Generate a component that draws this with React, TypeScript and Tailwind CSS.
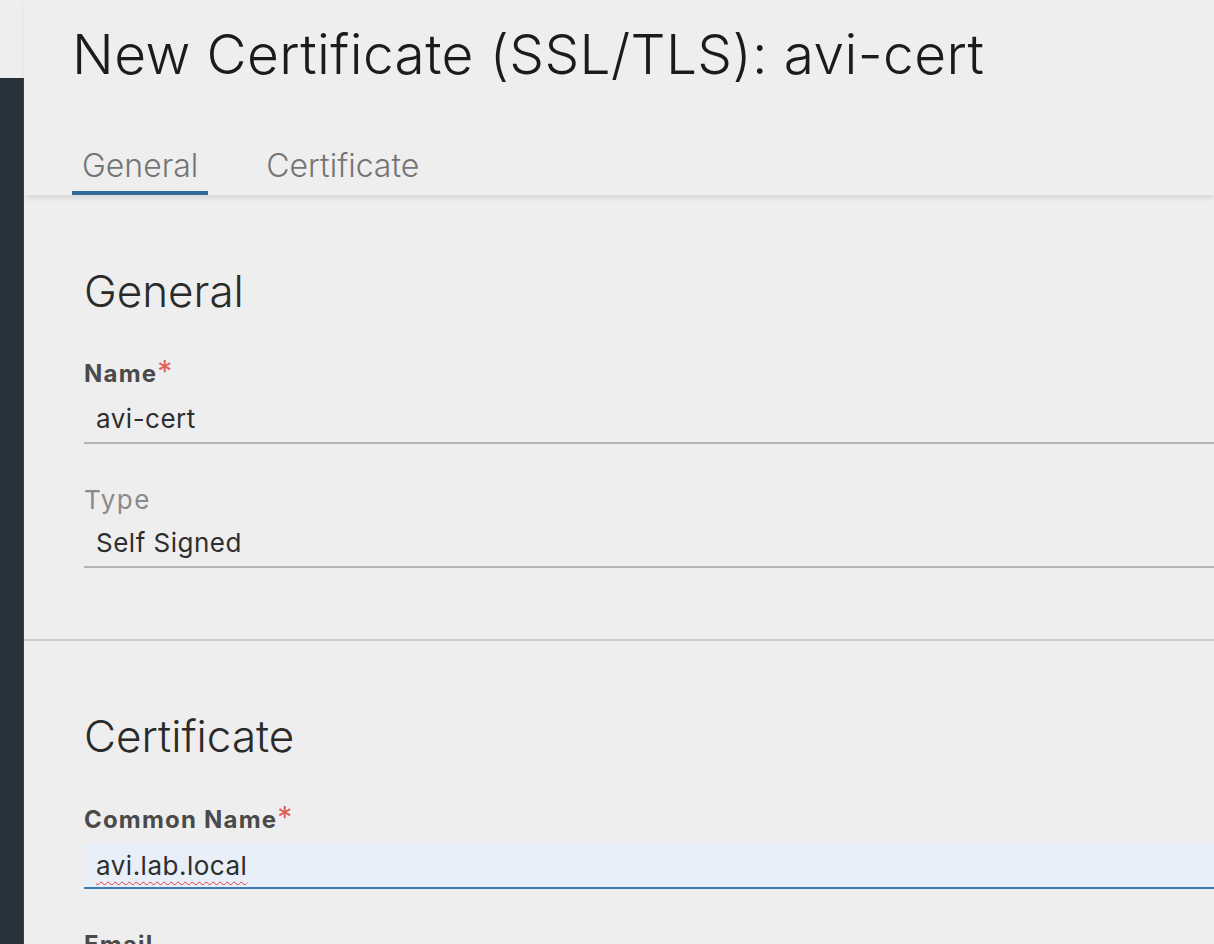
export default function App() {
  const font = { fontFamily: 'Inter, "Noto Sans", sans-serif' };
  return (
    <div className="w-[1214px] h-[944px] overflow-hidden bg-[#eeeeee] flex" style={font}>
      <div className="w-[24px] flex flex-col shrink-0">
        <div className="h-[78px]" />
        <div className="flex-1 bg-[#28323b] border-r border-[#3a434b]" />
      </div>
      <div className="flex-1 flex flex-col min-w-0">
        <div className="relative shadow-[0_4px_5px_-1px_rgba(0,0,0,0.10)]">
          <h1 className="pl-[48px] pt-[22px] text-[55px] leading-[64px] font-light tracking-[0.4px] text-[#1b1b1b] whitespace-nowrap">
            New Certificate (SSL/TLS): avi-cert
          </h1>
          <div className="flex pl-[48px] mt-[60px]">
            <div className="px-[10px] pb-[5px] border-b-[4px] border-[#2f6b9a] text-[32px] leading-[40px] text-[#757575] font-light">
              General
            </div>
            <div className="ml-[48px] px-[10px] pb-[5px] border-b-[4px] border-transparent text-[32px] leading-[40px] text-[#757575] font-light">
              Certificate
            </div>
          </div>
        </div>
        <div className="pl-[60px] pt-[70px]">
          <h2 className="text-[44px] leading-[52px] font-light text-[#2a2a2a]">General</h2>
          <div className="mt-[44px] h-[33px] text-[24px] leading-[26px] font-bold tracking-[1.2px] text-[#4a4a4a]">
            Name<span className="text-[#e0605a] font-normal text-[30px] leading-[20px] align-top tracking-normal">*</span>
          </div>
          <div className="border-b-2 border-[#b5b5b5] pl-[12px] h-[50px] flex items-center text-[26px] tracking-[0.5px] text-[#2e2e2e]">
            avi-cert
          </div>
          <div className="mt-[41px] h-[33px] text-[26px] leading-[30px] tracking-[1.5px] text-[#8a8a8a]">Type</div>
          <div className="border-b-2 border-[#b5b5b5] pl-[12px] h-[50px] flex items-center text-[26px] tracking-[0.5px] text-[#2e2e2e]">
            Self Signed
          </div>
        </div>
        <div className="mt-[71px] border-t-2 border-[#cfcfcf]" />
        <div className="pl-[60px] pt-[69px]">
          <h2 className="text-[44px] leading-[52px] font-light text-[#2a2a2a]">Certificate</h2>
          <div className="mt-[45px] h-[36px] text-[24px] leading-[26px] font-bold tracking-[1.2px] text-[#4a4a4a]">
            Common Name<span className="text-[#e0605a] font-normal text-[30px] leading-[20px] align-top tracking-normal">*</span>
          </div>
          <div className="border-b-2 border-[#3e7db0] bg-[#e8eff9] pl-[12px] h-[46px] flex items-center text-[26px] tracking-[0.5px] text-[#2e2e2e]">
            <span className="underline decoration-wavy decoration-[#e03a3a] decoration-1 underline-offset-[6px]">avi.lab.local</span>
          </div>
          <div className="mt-[43px] text-[24px] leading-[26px] font-bold tracking-[1.2px] text-[#4a4a4a]">Email</div>
        </div>
      </div>
    </div>
  );
}
